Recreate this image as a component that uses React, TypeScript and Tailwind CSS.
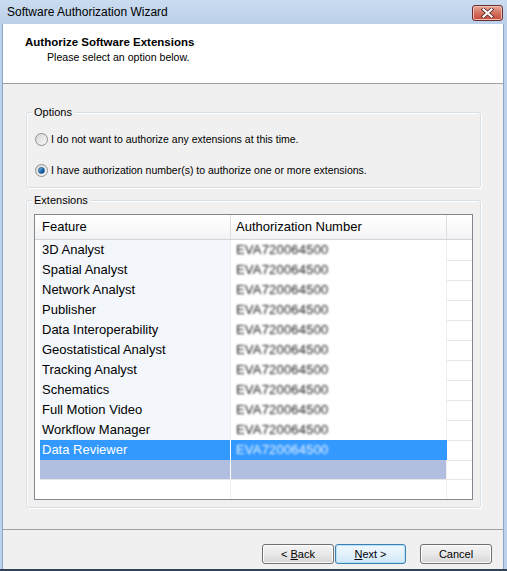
import React from 'react';

// ---- data ----

const features = [
    '3D Analyst',
    'Spatial Analyst',
    'Network Analyst',
    'Publisher',
    'Data Interoperability',
    'Geostatistical Analyst',
    'Tracking Analyst',
    'Schematics',
    'Full Motion Video',
    'Workflow Manager',
    'Data Reviewer',
];

const FONT = { fontFamily: '"Liberation Sans", Arial, sans-serif' };

// ---- small pieces ----

const Radio = ({ checked, label }: { checked?: boolean; label: string }) => (
    <div className="flex items-center h-[17px] pl-[8px]">
        <span className="w-[13px] h-[13px] rounded-full border border-[#8e8f8f] bg-gradient-to-br from-[#d7d7d7] to-[#f8f8f8] flex items-center justify-center shrink-0">
            {checked && (
                <span className="w-[7px] h-[7px] rounded-full bg-gradient-to-br from-[#8fd0f8] via-[#1f6fb4] to-[#0a3f7c] border border-[#1d5b93]" />
            )}
        </span>
        <span className="ml-[3px] text-[10.5px] text-black leading-none">{label}</span>
    </div>
);

const GroupBox = ({ title, className, children }: { title: string; className: string; children: React.ReactNode }) => (
    <div className={`relative mx-[23px] mr-[22px] border border-[#d5dfe5] rounded-[3px] shadow-[inset_1px_1px_0_#ffffff,1px_1px_0_#ffffff] ${className}`}>
        <span className="absolute left-[5px] top-[-7px] px-[2px] bg-[#f0f0f0] text-[11px] leading-[13px] text-black">{title}</span>
        {children}
    </div>
);

const Button = ({ children, primary }: { children: React.ReactNode; primary?: boolean }) => (
    <button
        className={`h-[20px] rounded-[3px] border text-[11px] text-black leading-none flex items-center justify-center ${primary
            ? 'border-[#3c7fb1] bg-gradient-to-b from-[#f1f8fd] via-[#e3f1fb] to-[#cfe7f8] shadow-[inset_0_0_0_1px_#b6e1fb]'
            : 'border-[#707070] bg-gradient-to-b from-[#f4f4f4] via-[#e9e9e9] to-[#d5d5d5] shadow-[inset_0_0_0_1px_#fcfcfc]'
            }`}
        style={{ width: primary ? 71 : 72 }}
    >
        {children}
    </button>
);

const BlurredNumber = ({ selected }: { selected?: boolean }) => (
    <span className={`blur-[1.3px] tracking-[0.2px] ${selected ? 'text-[#e8f2ff]' : 'text-[#222222]'}`}>EVA720064500</span>
);

// ---- main ----

export default function App() {
    return (
        <div className="w-[507px] h-[571px] flex flex-col bg-[#bdd2ea] border-b-2 border-[#2f4257] overflow-hidden" style={FONT}>
            {/* title bar */}
            <div className="h-[24px] shrink-0 flex items-center justify-between bg-gradient-to-b from-[#cadcf0] to-[#bbd0e9] pl-[7px] pr-[4px]">
                <span className="text-[12px] text-black">Software Authorization Wizard</span>
                <div className="w-[31px] h-[16px] mt-[2px] rounded-[3px] border border-[#6b2e2e] bg-gradient-to-b from-[#e9a99b] via-[#d2715f] to-[#c5473a] flex items-center justify-center shadow-[inset_0_0_0_1px_#f0c0b4]">
                    <svg width="13" height="10" viewBox="0 0 13 10">
                        <path d="M2.5 1.5 L10.5 8.5 M10.5 1.5 L2.5 8.5" stroke="#4a1f1f" strokeWidth="3.6" strokeLinecap="square" />
                        <path d="M2.5 1.5 L10.5 8.5 M10.5 1.5 L2.5 8.5" stroke="#ffffff" strokeWidth="2.2" strokeLinecap="square" />
                    </svg>
                </div>
            </div>

            {/* client area */}
            <div className="flex-1 ml-[2px] mr-[3px] border-x border-[#8ea6c6] bg-[#f0f0f0] flex flex-col">
                {/* header */}
                <div className="h-[60px] shrink-0 bg-white border-b border-[#a0a0a0] pl-[22px] pt-[12px]">
                    <div className="text-[11.5px] font-bold leading-[13px] text-black">Authorize Software Extensions</div>
                    <div className="text-[10.6px] leading-[13px] text-black mt-[2px] ml-[22px]">Please select an option below.</div>
                </div>

                <GroupBox title="Options" className="mt-[28px] h-[76px] pt-[18px] flex flex-col gap-[14px]">
                    <Radio label="I do not want to authorize any extensions at this time." />
                    <Radio checked label="I have authorization number(s) to authorize one or more extensions." />
                </GroupBox>

                <GroupBox title="Extensions" className="mt-[12px] h-[308px] pt-[13px] px-[7px]">
                    <div className="h-[286px] border border-[#828790] bg-white flex flex-col text-[13px] text-black">
                        {/* header row */}
                        <div className="h-[25px] shrink-0 grid grid-cols-[5px_191px_216px_1fr] border-b border-[#d5d5d5] bg-gradient-to-b from-[#ffffff] via-[#fafafa] to-[#f1f2f4]">
                            <div />
                            <div className="border-r border-[#dedede] flex items-center pl-[2px]">Feature</div>
                            <div className="border-r border-[#dedede] flex items-center pl-[5px]">Authorization Number</div>
                            <div />
                        </div>

                        {/* data rows */}
                        {features.map((name, i) => {
                            const selected = i === features.length - 1;
                            return (
                                <div key={name} className="h-[20px] shrink-0 grid grid-cols-[5px_191px_216px_1fr]">
                                    <div />
                                    <div className={`border-r border-b flex items-center pl-[2px] ${selected ? 'bg-[#3399ff] text-white border-r-[#ffffff] border-b-[#ffffff]' : 'bg-[#f3f7fc] border-r-[#eeeeee] border-b-[#e6e6e6]'}`}>
                                        {name}
                                    </div>
                                    <div className={`border-r border-b flex items-center pl-[5px] ${selected ? 'bg-[#3399ff] border-r-[#3399ff] border-b-[#ffffff]' : 'bg-white border-r-[#eeeeee] border-b-[#e6e6e6]'}`}>
                                        <BlurredNumber selected={selected} />
                                    </div>
                                    <div className="border-b border-[#e6e6e6]" />
                                </div>
                            );
                        })}

                        {/* new row */}
                        <div className="h-[20px] shrink-0 grid grid-cols-[5px_191px_216px_1fr]">
                            <div />
                            <div className="bg-[#b1bedf] border-r border-b border-r-[#ffffff] border-b-[#e6e6e6]" />
                            <div className="bg-[#b1bedf] border-r border-b border-r-[#eeeeee] border-b-[#e6e6e6]" />
                            <div className="border-b border-[#e6e6e6]" />
                        </div>

                        {/* empty space */}
                        <div className="flex-1 grid grid-cols-[5px_191px_216px_1fr]">
                            <div />
                            <div className="border-r border-[#eeeeee]" />
                            <div className="border-r border-[#eeeeee]" />
                            <div />
                        </div>
                    </div>
                </GroupBox>

                {/* footer */}
                <div className="mt-[21px] h-px shrink-0 bg-[#a0a0a0]" />
                <div className="mt-[14px] flex justify-end pr-[11px]">
                    <div className="flex">
                        <Button>
                            &lt; <span className="underline ml-[3px]">B</span>ack
                        </Button>
                        <div className="ml-[1px]">
                            <Button primary>
                                <span className="underline">N</span>ext &gt;
                            </Button>
                        </div>
                        <div className="ml-[14px]">
                            <Button>Cancel</Button>
                        </div>
                    </div>
                </div>
            </div>
        </div>
    );
}
